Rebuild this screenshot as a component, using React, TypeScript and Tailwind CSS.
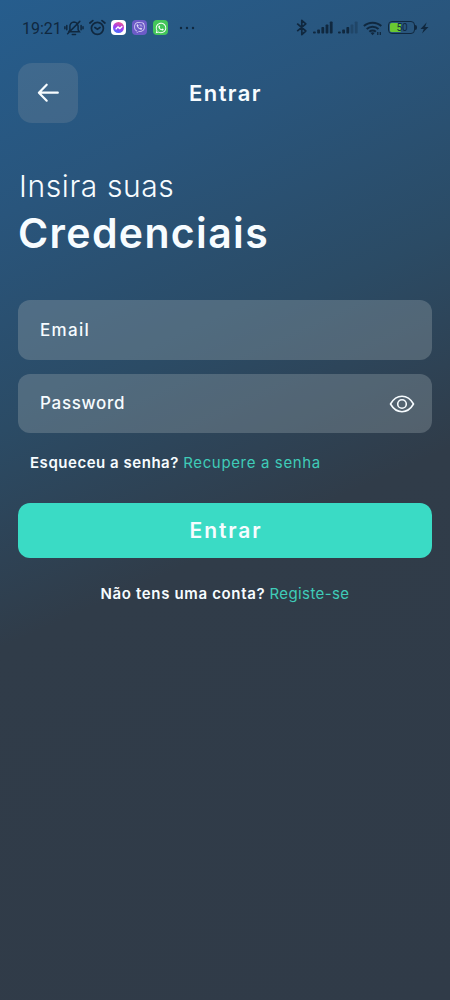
import React from 'react';
import { FaViber, FaWhatsapp } from 'react-icons/fa';

const SignalBars = ({ active }: { active: number }) => (
  <svg width="20" height="13" viewBox="0 0 20 13" fill="#10283f">
    {[2, 4, 6.5, 9, 12].map((h, i) => (
      <rect key={h} x={i * 4.2} y={12.5 - h} width="2.8" height={h} rx="0.8" opacity={i < active ? 1 : 0.35} />
    ))}
  </svg>
);

const StatusBar: React.FC = () => (
  <div className="flex h-14 items-center text-[#10283f]">
    <span className="ml-[22px] w-[38px] whitespace-nowrap pt-px font-[Roboto] text-[16px] leading-none">19:21</span>

    {/* Silencioso */}
    <svg className="ml-[4px]" width="20" height="18" viewBox="0 0 20 18" fill="none" stroke="currentColor" strokeWidth="1.5" strokeLinecap="round">
      <path d="M5.2 12.8h10.2l-1.3-2V7.3A4.2 4.2 0 0 0 10 3a4.2 4.2 0 0 0-4.1 4.3v3.5l-1.2 2M8.3 15.6h3.2M3.6 14.8 15.8 2.4M2.8 6.6v4.2M.9 7.7v2M17.1 6.6v4.2M19 7.7v2" />
    </svg>

    {/* Alarme */}
    <svg className="ml-[5px]" width="17" height="18" viewBox="0 0 17 18" fill="none" stroke="currentColor" strokeWidth="1.7" strokeLinecap="round">
      <circle cx="8.4" cy="9.3" r="6" />
      <path d="M.9 4 3.8 1.6M15.9 4 13 1.6M5.9 8.5l2.5 1.8 2.6-1.8" />
    </svg>

    <div className="ml-[5px] flex gap-[6px] pb-px">
      <span className="flex h-[15px] w-[15px] items-center justify-center rounded-[4px] bg-white">
        <span className="flex h-[11px] w-[11px] items-center justify-center rounded-full bg-[linear-gradient(20deg,#2f7dff,#a33cf0_50%,#ff5e7a)] text-white">
          <svg width="8" height="6" viewBox="0 0 8 6" fill="none" stroke="currentColor" strokeWidth="1.4" strokeLinejoin="round">
            <path d="m.7 4.4 2.2-2.5 2 1.7 2.4-2.3" />
          </svg>
        </span>
      </span>
      <span className="flex h-[15px] w-[15px] items-center justify-center rounded-[4px] bg-[#6c5bc7] text-[#e0dcf7]">
        <FaViber size={11} />
      </span>
      <span className="flex h-[15px] w-[15px] items-center justify-center rounded-[4px] bg-[#43c65a] text-white">
        <FaWhatsapp size={12} />
      </span>
    </div>

    <svg className="ml-[11px]" width="16" height="4" viewBox="0 0 16 4" fill="currentColor">
      <circle cx="2" cy="2" r="1.2" />
      <circle cx="8" cy="2" r="1.2" />
      <circle cx="14" cy="2" r="1.2" />
    </svg>

    <div className="ml-auto mr-[21px] flex items-center pb-px">
      <svg width="12" height="17" viewBox="0 0 12 17" fill="none" stroke="currentColor" strokeWidth="1.7" strokeLinejoin="round">
        <path d="m1.2 4.6 8.6 7.4-4 3.6V1.4l4 3.4-8.6 7.4" />
      </svg>
      <span className="ml-[5px]"><SignalBars active={5} /></span>
      <span className="ml-[5px]"><SignalBars active={3} /></span>
      <svg className="ml-[5px]" width="20" height="16" viewBox="0 0 20 16" fill="none" stroke="currentColor" strokeWidth="2">
        <path d="M.9 6.1a12.7 12.7 0 0 1 17.4 0M3.7 9a8.7 8.7 0 0 1 11.8 0M6.4 11.8a4.8 4.8 0 0 1 6.4 0" />
        <path d="m9.6 15.2-2-2.1a3 3 0 0 1 4 0z" fill="currentColor" stroke="none" />
        <path d="M14.8 12v2.9M17.3 12v2.9" strokeWidth="1.3" />
      </svg>
      <div className="relative ml-[5px] flex h-[13px] w-[27px] items-center rounded-[4px] border-[1.5px] border-[#10283f] p-[1px]">
        <div className="h-full w-[11px] rounded-[1.5px] bg-[#69c832]" />
        <span className="absolute inset-0 flex items-center justify-center pl-px font-[Roboto] text-[10px] leading-none">50</span>
      </div>
      <div className="h-[5px] w-[2px] rounded-r-sm bg-[#10283f]" />
      <svg className="ml-[3px]" width="9" height="12" viewBox="0 0 9 12" fill="currentColor">
        <path d="M6.7.3.5 7h3.3L2 11.6 8.5 5H5.1z" />
      </svg>
    </div>
  </div>
);

export default function App() {
  return (
    <div className="flex h-[1000px] w-[450px] flex-col bg-[linear-gradient(156deg,#265d8d_0%,#29557c_18%,#2b4b65_36%,#303c49_54%,#303b48_100%)] font-['Inter',sans-serif] text-[#f7fcff]">
      <StatusBar />

      <header className="mx-[18px] mt-[7px] grid h-[60px] grid-cols-[60px_1fr_60px] items-center">
        <button className="flex h-[60px] w-[60px] items-center justify-center rounded-[14px] bg-[#a0a4a8]/20" aria-label="Voltar">
          <svg width="24" height="20" viewBox="0 0 24 20" fill="none" stroke="currentColor" strokeWidth="2.2" strokeLinecap="round" strokeLinejoin="round">
            <path d="M21.8 9.7H3.2M10.7 1.7l-7.8 8 7.8 8" />
          </svg>
        </button>
        <h1 className="pl-px text-center text-[22px] font-semibold tracking-[1.4px]">Entrar</h1>
      </header>

      <div className="ml-[19px] mt-[43px] whitespace-nowrap">
        <p className="text-[30px] font-light leading-[40px] tracking-[0.6px]">Insira suas</p>
        <p className="-ml-px text-[41px] font-semibold leading-[54px] tracking-[1.35px]">Credenciais</p>
      </div>

      <form className="mx-[18px] mt-[40px] flex flex-col gap-[14px]">
        <div className="flex h-[60px] items-center rounded-[12px] bg-[#9eaab0]/33 px-[22px] pt-px">
          <span className="text-[17px] font-medium tracking-[1.3px]">Email</span>
        </div>
        <div className="flex h-[59px] items-center justify-between rounded-[12px] bg-[#9eaab0]/33 pl-[22px] pr-[17px]">
          <span className="pt-px text-[17px] font-medium tracking-[0.7px]">Password</span>
          <svg width="26" height="18" viewBox="0 0 26 18" fill="none" stroke="currentColor" strokeWidth="1.6" strokeLinejoin="round">
            <path d="M1.5 9C4.4 4 8.4 1.3 13 1.3S21.6 4 24.5 9C21.6 14 17.6 16.7 13 16.7S4.4 14 1.5 9Z" />
            <circle cx="13" cy="9" r="4.3" />
          </svg>
        </div>
      </form>

      <p className="ml-[30px] mt-[18px] whitespace-nowrap text-[15px] leading-6">
        <span className="font-semibold tracking-[0.53px]">Esqueceu a senha?</span>{' '}
        <a className="tracking-[0.65px] text-[#3fccb8]">Recupere a senha</a>
      </p>

      <button className="mx-[18px] mt-[28px] h-[55px] rounded-[12px] bg-[#3adbc5] pl-[2px] pt-px text-[21px] font-semibold tracking-[1.9px]">
        Entrar
      </button>

      <p className="mt-[24px] whitespace-nowrap text-center text-[15px] leading-6">
        <span className="font-semibold tracking-[0.65px]">Não tens uma conta?</span>{' '}
        <a className="tracking-[0.4px] text-[#3fccb8]">Registe-se</a>
      </p>
    </div>
  );
}
